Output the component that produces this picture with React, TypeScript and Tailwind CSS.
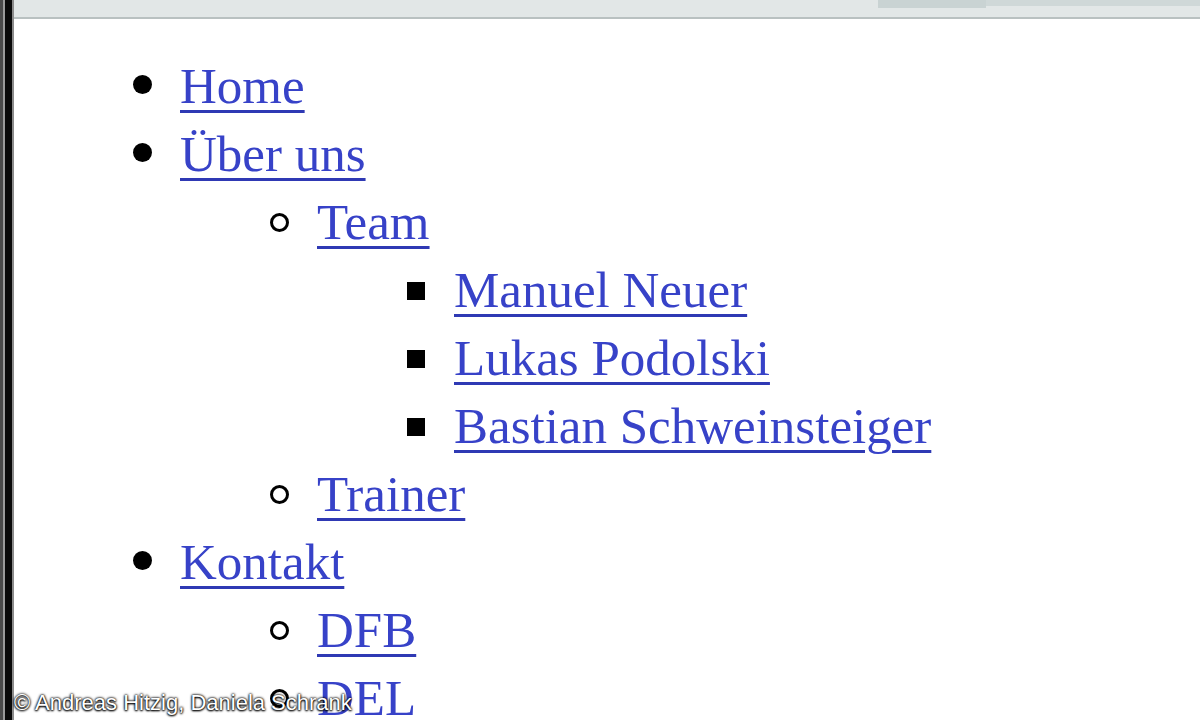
import React from 'react';

type Item = { label: string; children?: Item[] };

const menu: Item[] = [
  { label: 'Home' },
  {
    label: 'Über uns',
    children: [
      {
        label: 'Team',
        children: [
          { label: 'Manuel Neuer' },
          { label: 'Lukas Podolski' },
          { label: 'Bastian Schweinsteiger' },
        ],
      },
      { label: 'Trainer' },
    ],
  },
  {
    label: 'Kontakt',
    children: [{ label: 'DFB' }, { label: 'DEL' }],
  },
];

const Bullet: React.FC<{ level: number }> = ({ level }) => {
  if (level === 0) return <span className="block w-[19px] h-[19px] rounded-full bg-black -mt-[3px]" />;
  if (level === 1)
    return <span className="block w-[19px] h-[19px] rounded-full border-[3px] border-black bg-white" />;
  return <span className="block w-[18px] h-[18px] bg-black mt-[2px]" />;
};

const List: React.FC<{ items: Item[]; level: number }> = ({ items, level }) => (
  <ul className={level === 0 ? 'pl-[90px]' : 'pl-[137px]'}>
    {items.map((it) => (
      <li key={it.label}>
        <div className="flex items-center h-[68px]">
          <div className="w-[76px] flex justify-center">
            <Bullet level={level} />
          </div>
          <span className="font-['Liberation_Serif',serif] text-[51px] text-[#3742c8] underline decoration-[#2f39b4] decoration-[3px] underline-offset-[7px] leading-[68px] whitespace-nowrap cursor-pointer">
            {it.label}
          </span>
        </div>
        {it.children && <List items={it.children} level={level + 1} />}
      </li>
    ))}
  </ul>
);

export default function App() {
  return (
    <div className="relative w-[1200px] h-[720px] overflow-hidden bg-white flex">
      {/* window frame on the left */}
      <div className="flex shrink-0">
        <div className="w-[3px] bg-[#4a4a4a]" />
        <div className="w-[2px] bg-[#9a9a9a]" />
        <div className="w-[7px] bg-[#0a0a0a]" />
        <div className="w-[2px] bg-[#8c8c8c]" />
      </div>

      <div className="flex-1 flex flex-col min-w-0">
        {/* toolbar strip */}
        <div className="h-[19px] shrink-0 bg-[#e2e7e7] border-b-2 border-[#b9c1c1] flex">
          <div className="w-[864px]" />
          <div className="w-[108px] h-[8px] bg-[#c9d3d3]" />
          <div className="flex-1 h-[6px] bg-[#cfd8d8]" />
        </div>

        <div className="pt-[33px]">
          <List items={menu} level={0} />
        </div>
      </div>

      <div className="absolute left-[14px] bottom-[6px] text-[22px] text-white leading-none font-['Liberation_Sans',Arial,sans-serif] [text-shadow:0_0_2px_#000,0_0_3px_#000,0_1px_2px_#000]">
        © Andreas Hitzig, Daniela Schrank
      </div>
    </div>
  );
}
